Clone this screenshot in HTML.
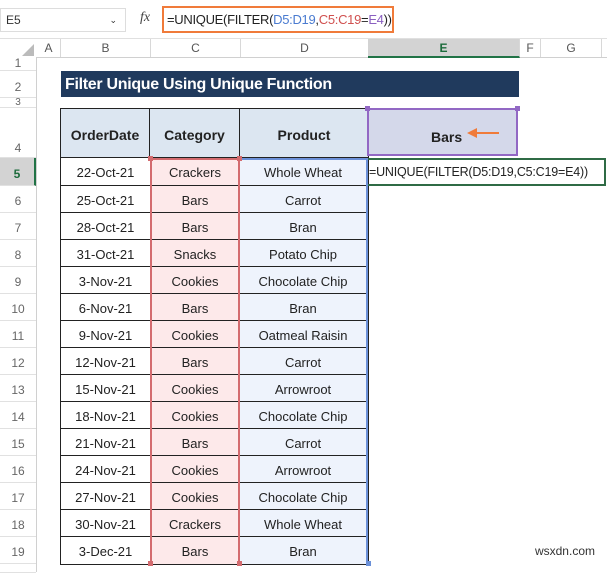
<!DOCTYPE html><html><head><style>
body{margin:0;width:607px;height:572px;overflow:hidden;background:#fff;font-family:"Liberation Sans",sans-serif;position:relative}
.a{position:absolute}
.rh{position:absolute;left:0;width:36px;text-align:center;color:#666;font-size:12px;border-bottom:1px solid #e1e1e1;background:#fff}
.ch{position:absolute;top:39px;height:18px;line-height:18px;text-align:center;color:#555;font-size:12px;border-right:1px solid #d8d8d8}
.c{position:absolute;text-align:center;font-size:13px;color:#222;box-sizing:border-box;border-bottom:1px solid #222}
</style></head><body>
<div class="a" style="left:0;top:0;width:607px;height:38px;background:#fff;border-bottom:1px solid #e0e0e0"></div>
<div class="a" style="left:0;top:8px;width:126px;height:24px;border:1px solid #ddd;box-sizing:border-box;font-size:12px;line-height:22px;padding-left:5px;color:#333">E5<span style="position:absolute;right:8px;font-size:9px">⌄</span></div>
<div class="a" style="left:140px;top:10px;font-family:'Liberation Serif',serif;font-style:italic;font-size:14px;color:#444">fx</div>
<div class="a" style="left:162px;top:6px;width:232px;height:27px;border:2px solid #f07b3a;box-sizing:border-box;font-size:13px;letter-spacing:-0.3px;line-height:23px;padding-left:3px;color:#222;white-space:nowrap">=UNIQUE(FILTER(<span style="color:#4a7bd0">D5:D19</span>,<span style="color:#d0504f">C5:C19</span>=<span style="color:#8a5fc0">E4</span>))</div>
<div class="a" style="left:0;top:39px;width:607px;height:18px;background:#fff;border-bottom:1px solid #d0d0d0"></div>
<div class="a" style="left:22px;top:44px;width:0;height:0;border-left:12px solid transparent;border-bottom:12px solid #bbb"></div>
<div class="ch" style="left:37px;width:23px">A</div>
<div class="ch" style="left:61px;width:89px">B</div>
<div class="ch" style="left:151px;width:89px">C</div>
<div class="ch" style="left:241px;width:127px">D</div>
<div class="ch" style="left:368px;width:151px;background:#d3d3d3;color:#1d6b3c;font-weight:bold;border-bottom:2px solid #217346;height:17px">E</div>
<div class="ch" style="left:520px;width:20px">F</div>
<div class="ch" style="left:541px;width:60px">G</div>
<div class="a" style="left:36px;top:57px;width:1px;height:515px;background:#d0d0d0"></div>
<div class="rh" style="top:57px;height:13px;line-height:13px">1</div>
<div class="rh" style="top:71px;height:26px;line-height:32px">2</div>
<div class="rh" style="top:98px;height:9px;line-height:9px;font-size:10px">3</div>
<div class="rh" style="top:108px;height:49px;line-height:80px">4</div>
<div class="rh" style="top:158px;height:27px;line-height:32px;background:#d3d3d3;color:#1d6b3c;font-weight:bold;border-right:2px solid #217346;width:34px">5</div>
<div class="a" style="left:61px;top:71px;width:458px;height:26px;background:#203a5d;color:#fff;font-weight:bold;font-size:16px;letter-spacing:-0.3px;line-height:28px;padding-left:4px;box-sizing:border-box">Filter Unique Using Unique Function</div>
<div class="a" style="left:60px;top:108px;width:309px;height:457px;border:1px solid #222;box-sizing:border-box"></div>
<div class="c" style="left:61px;top:109px;width:89px;height:49px;line-height:52px;background:#dce6f1;font-weight:bold;font-size:14px;border-right:1px solid #222">OrderDate</div>
<div class="c" style="left:150px;top:109px;width:90px;height:49px;line-height:52px;background:#dce6f1;font-weight:bold;font-size:14px;border-right:1px solid #222">Category</div>
<div class="c" style="left:240px;top:109px;width:128px;height:49px;line-height:52px;background:#dce6f1;font-weight:bold;font-size:14px">Product</div>
<div class="a" style="left:367px;top:108px;width:151px;height:48px;background:#d4d8ea;border:2px solid #9268c4;box-sizing:border-box;color:#222">
<span style="position:absolute;left:62px;top:19px;font-weight:bold;font-size:14px">Bars</span>
<span style="position:absolute;left:106px;top:22px;width:24px;height:2px;background:#f07b3a"></span><span style="position:absolute;left:98px;top:18px;width:0;height:0;border-top:5px solid transparent;border-bottom:5px solid transparent;border-right:10px solid #f07b3a"></span></div>
<div class="a" style="left:365px;top:106px;width:5px;height:5px;background:#9268c4"></div><div class="a" style="left:515px;top:106px;width:5px;height:5px;background:#9268c4"></div>
<div class="a" style="left:366px;top:158px;width:240px;height:28px;border:2px solid #2f6b45;box-sizing:border-box;font-size:12.5px;letter-spacing:-0.2px;line-height:24px;padding-left:1px;color:#222;white-space:nowrap">=UNIQUE(FILTER(D5:D19,C5:C19=E4))</div>
<div class="a" style="left:150px;top:158px;width:90px;height:406px;background:#fde9ea;border-left:2px solid #d36b6f;border-right:2px solid #d36b6f;box-sizing:border-box"></div>
<div class="a" style="left:240px;top:158px;width:128px;height:406px;background:#eef3fc;border-right:2px solid #6b90d8;border-top:2px solid #6b90d8;box-sizing:border-box"></div>
<div class="a" style="left:150px;top:158px;width:90px;height:2px;background:#d36b6f"></div>
<div class="a" style="left:148px;top:156px;width:5px;height:5px;background:#d36b6f"></div><div class="a" style="left:237px;top:156px;width:5px;height:5px;background:#d36b6f"></div>
<div class="a" style="left:148px;top:561px;width:5px;height:5px;background:#d36b6f"></div><div class="a" style="left:237px;top:561px;width:5px;height:5px;background:#d36b6f"></div>
<div class="a" style="left:366px;top:561px;width:5px;height:5px;background:#6b90d8"></div>
<div id="rows"></div>
<div class="a" style="right:12px;top:544px;font-size:12px;color:#333">wsxdn.com</div>
<script>
var d=[["22-Oct-21","Crackers","Whole Wheat"],["25-Oct-21","Bars","Carrot"],["28-Oct-21","Bars","Bran"],["31-Oct-21","Snacks","Potato Chip"],["3-Nov-21","Cookies","Chocolate Chip"],["6-Nov-21","Bars","Bran"],["9-Nov-21","Cookies","Oatmeal Raisin"],["12-Nov-21","Bars","Carrot"],["15-Nov-21","Cookies","Arrowroot"],["18-Nov-21","Cookies","Chocolate Chip"],["21-Nov-21","Bars","Carrot"],["24-Nov-21","Cookies","Arrowroot"],["27-Nov-21","Cookies","Chocolate Chip"],["30-Nov-21","Crackers","Whole Wheat"],["3-Dec-21","Bars","Bran"]];
var h="";
for(var i=0;i<15;i++){var t=i==0?158:186+(i-1)*27,hh=i==0?28:27;
if(i>0)h+='<div class="rh" style="top:'+t+'px;height:'+(hh-1)+'px;line-height:'+(hh+4)+'px">'+(i+5)+'</div>';
var bb=i==14?'border-bottom:none;':'';
h+='<div class="c" style="'+bb+'left:61px;top:'+t+'px;width:89px;height:'+hh+'px;line-height:'+(hh+2)+'px">'+d[i][0]+'</div>';
h+='<div class="c" style="'+bb+'left:152px;top:'+t+'px;width:86px;height:'+hh+'px;line-height:'+(hh+2)+'px">'+d[i][1]+'</div>';
h+='<div class="c" style="'+bb+'left:240px;top:'+t+'px;width:126px;height:'+hh+'px;line-height:'+(hh+2)+'px">'+d[i][2]+'</div>';}
h+='<div class="rh" style="top:564px;height:8px"></div>';
document.getElementById("rows").innerHTML=h;
</script>
</body></html>
